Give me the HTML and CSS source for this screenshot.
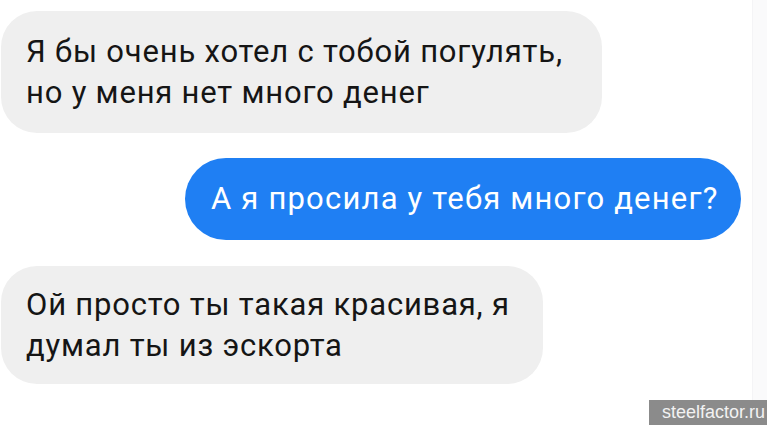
FILE: index.html
```html
<!DOCTYPE html>
<html lang="ru">
<head>
  <meta charset="UTF-8">
  <meta name="viewport" content="width=device-width, initial-scale=1.0">
  <title>Переписка</title>
  <link rel="stylesheet" href="styles.css">
</head>
<body>

  <!-- Chat -->
  <main class="chat">
    <div class="message incoming msg-first">Я бы очень хотел с тобой погулять, но у меня нет много денег</div>
    <div class="message outgoing">А я просила у тебя много денег?</div>
    <div class="message incoming msg-last">Ой просто ты такая красивая, я думал ты из эскорта</div>
  </main>

  <div class="edge"></div>

  <!-- Watermark -->
  <div class="watermark">steelfactor.ru</div>

</body>
</html>
```

FILE: styles.css
```css
/* Global Styles */
html, body {
  height: 100%;
}

body {
  margin: 0;
  padding: 0;
  background-color: #ffffff;
  font-family: Roboto, "Noto Sans", Arial, sans-serif;
  overflow: hidden;
  position: relative;
}

/* Chat column */
.chat {
  display: flex;
  flex-direction: column;
  align-items: flex-start;
  padding: 11px 0 0 1px;
}

.message {
  box-sizing: border-box;
  font-size: 31px;
  line-height: 41px;
  letter-spacing: 0.8px;
  padding: 20px 24px 20px 25px;
  border-radius: 36px;
}

.incoming {
  background-color: #efefef;
  color: #151515;
}

.msg-first {
  width: 601px;
}

.msg-last {
  width: 542px;
  margin-top: 26px;
  padding-top: 18px;
  padding-bottom: 18px;
}

.outgoing {
  margin-left: 184px;
  margin-top: 25px;
  background-color: #1f7ff3;
  color: #ffffff;
  letter-spacing: 1.2px;
  border-radius: 41px;
  padding: 20px 22px 21px 26px;
}

/* Faint strip on the right edge */
.edge {
  position: absolute;
  top: 0;
  right: 0;
  width: 14px;
  height: 100%;
  background-color: #fafafb;
  border-left: 1px solid #f4f4f6;
}

.watermark {
  position: absolute;
  right: 0;
  bottom: 0;
  width: 118px;
  height: 25px;
  background-color: #8b8b8b;
  color: #f2f2f2;
  font-family: "Liberation Sans", Arial, sans-serif;
  font-size: 18px;
  line-height: 25px;
  text-align: right;
  padding-right: 2px;
  box-sizing: border-box;
}
```
